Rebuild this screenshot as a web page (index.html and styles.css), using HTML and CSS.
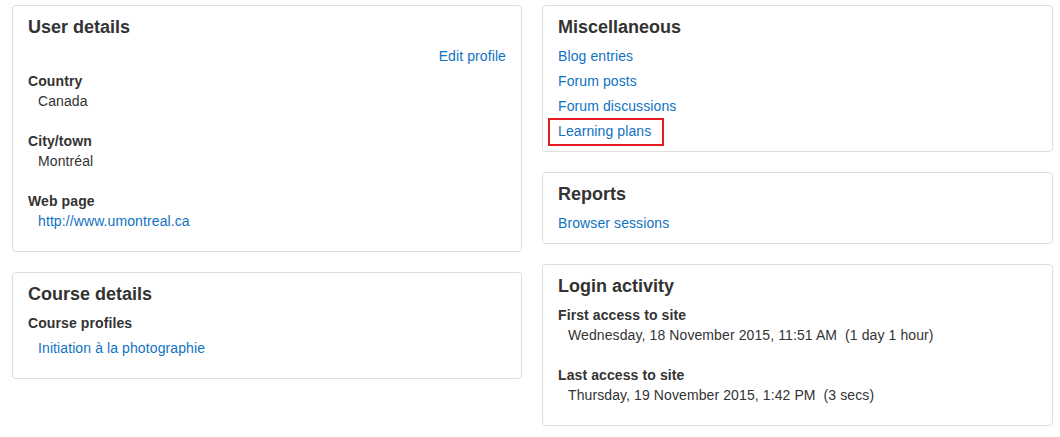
FILE: index.html
```html
<!DOCTYPE html>
<html>
<head>
<meta charset="utf-8">
<link rel="stylesheet" href="styles.css">
</head>
<body>
<div class="page">
  <div class="column">
    <section class="card">
      <h3 class="card-title">User details</h3>
      <div class="edit-row"><a href="#">Edit profile</a></div>
      <dl class="fields">
        <div class="field"><dt>Country</dt><dd>Canada</dd></div>
        <div class="field"><dt>City/town</dt><dd>Montréal</dd></div>
        <div class="field"><dt>Web page</dt><dd><a href="#">http://www.umontreal.ca</a></dd></div>
      </dl>
    </section>
    <section class="card">
      <h3 class="card-title">Course details</h3>
      <dl class="fields">
        <div class="field"><dt>Course profiles</dt><dd class="linklist"><a href="#">Initiation à la photographie</a></dd></div>
      </dl>
    </section>
  </div>
  <div class="column">
    <section class="card">
      <h3 class="card-title">Miscellaneous</h3>
      <ul class="links">
        <li><a href="#">Blog entries</a></li>
        <li><a href="#">Forum posts</a></li>
        <li><a href="#">Forum discussions</a></li>
        <li><a href="#" class="highlight">Learning plans</a></li>
      </ul>
    </section>
    <section class="card">
      <h3 class="card-title">Reports</h3>
      <ul class="links">
        <li><a href="#">Browser sessions</a></li>
      </ul>
    </section>
    <section class="card">
      <h3 class="card-title">Login activity</h3>
      <dl class="fields">
        <div class="field"><dt>First access to site</dt><dd>Wednesday, 18 November 2015, 11:51 AM&nbsp; (1 day 1 hour)</dd></div>
        <div class="field"><dt>Last access to site</dt><dd>Thursday, 19 November 2015, 1:42 PM&nbsp; (3 secs)</dd></div>
      </dl>
    </section>
  </div>
</div>
</body>
</html>
```

FILE: styles.css
```css
* { box-sizing: border-box; }
html, body { margin: 0; padding: 0; background: #fff; }
body {
  font-family: "Liberation Sans", Arial, sans-serif;
  font-size: 14px;
  line-height: 20px;
  letter-spacing: 0.1px;
  color: #333;
}
a { color: #1072c2; text-decoration: none; }
.page {
  display: grid;
  grid-template-columns: 510px 1fr;
  column-gap: 20px;
  padding: 5px 7px 0 12px;
  align-items: start;
}
.column {
  display: flex;
  flex-direction: column;
  gap: 20px;
}
.card {
  border: 1px solid #dedede;
  border-radius: 4px;
  padding: 10px 15px;
}
.card-title {
  margin: 0 0 8px 0;
  font-size: 18px;
  line-height: 22px;
  font-weight: bold;
  letter-spacing: 0;
  color: #333;
}
.edit-row {
  text-align: right;
  margin-bottom: 5px;
}
.fields {
  margin: 0 0 10px 0;
  display: flex;
  flex-direction: column;
  gap: 20px;
}
.field dt {
  font-weight: bold;
  margin: 0;
}
.field dd {
  margin: 0 0 0 10px;
}
.field dd.linklist { margin-top: 5px; }
.links {
  list-style: none;
  margin: 0;
  padding: 0;
  display: flex;
  flex-direction: column;
  gap: 5px;
}
.highlight {
  position: relative;
}
.highlight::after {
  content: "";
  position: absolute;
  left: -10px;
  right: -13px;
  top: -5px;
  bottom: -7px;
  border: 2px solid #e31b23;
}
```
